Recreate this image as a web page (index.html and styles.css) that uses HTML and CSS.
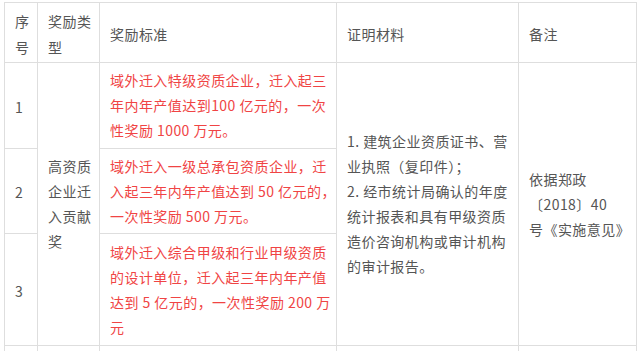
FILE: index.html
```html
<!DOCTYPE html>
<html lang="zh-CN">
<head>
<meta charset="utf-8">
<link rel="stylesheet" href="styles.css">
</head>
<body>
<table class="award">
  <colgroup>
    <col class="c-no">
    <col class="c-type">
    <col class="c-std">
    <col class="c-doc">
    <col class="c-note">
  </colgroup>
  <thead>
    <tr class="head">
      <th>序<br>号</th>
      <th>奖励类<br>型</th>
      <th>奖励标准</th>
      <th>证明材料</th>
      <th>备注</th>
    </tr>
  </thead>
  <tbody>
    <tr class="r1">
      <td class="num">1</td>
      <td rowspan="3">高资质<br>企业迁<br>入贡献<br>奖</td>
      <td class="red">域外迁入特级资质企业，迁入起三<br>年内年产值达到100 亿元的，一次<br>性奖励 1000 万元。</td>
      <td rowspan="3">1. 建筑企业资质证书、营<br>业执照（复印件）；<br>2. 经市统计局确认的年度<br>统计报表和具有甲级资质<br>造价咨询机构或审计机构<br>的审计报告。</td>
      <td rowspan="3">依据郑政<br>〔2018〕40<br>号《实施意见》</td>
    </tr>
    <tr class="r2">
      <td class="num">2</td>
      <td class="red">域外迁入一级总承包资质企业，迁<br>入起三年内年产值达到 50 亿元的，<br>一次性奖励 500 万元。</td>
    </tr>
    <tr class="r3">
      <td class="num">3</td>
      <td class="red">域外迁入综合甲级和行业甲级资质<br>的设计单位，迁入起三年内年产值<br>达到 5 亿元的，一次性奖励 200 万<br>元</td>
    </tr>
    <tr class="r4">
      <td></td><td></td><td></td><td></td><td></td>
    </tr>
  </tbody>
</table>
</body>
</html>
```
FILE: styles.css
```css
html, body {
  margin: 0;
  padding: 0;
  background: #fff;
}
body {
  overflow: hidden;
}
.award {
  margin: 2px 0 0 4px;
  width: 632px;
  table-layout: fixed;
  border-collapse: collapse;
  font-family: "Microsoft YaHei", "Noto Sans CJK SC", "Noto Sans", sans-serif;
  font-size: 14px;
  letter-spacing: 0.45px;
  line-height: 25px;
  color: #555;
}
.c-no { width: 33px; }
.c-type { width: 62px; }
.c-std { width: 237px; }
.c-doc { width: 182px; }
.c-note { width: 118px; }
.award th,
.award td {
  border: 1px solid #dedede;
  padding: 0 2px 0 10px;
  text-align: left;
  vertical-align: middle;
  font-weight: normal;
  white-space: nowrap;
  overflow: hidden;
}
.award th {
  padding-top: 3px;
  line-height: 26px;
}
.award td.num {
  padding-top: 3px;
}
.head { height: 60px; }
.r1 { height: 86px; }
.r2 { height: 85px; }
.r3 { height: 112px; }
.r4 { height: 30px; }
.award td.red {
  color: #f04444;
}
```
